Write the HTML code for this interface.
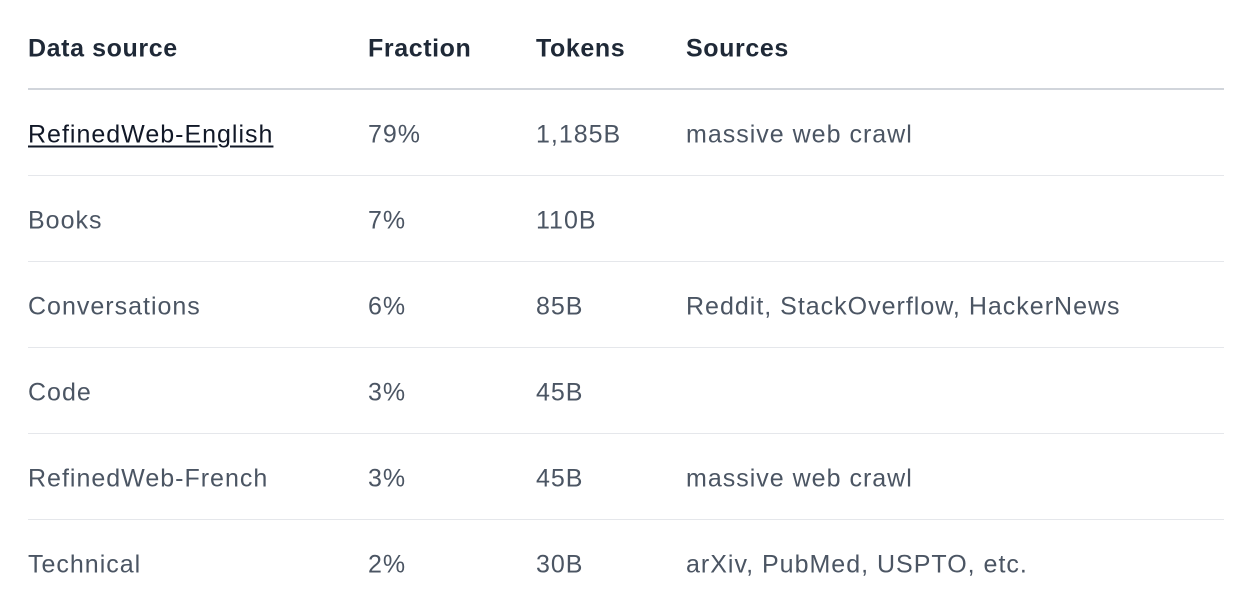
<!DOCTYPE html>
<html><head><style>
html,body{margin:0;padding:0;background:#fff;width:1240px;height:612px;overflow:hidden}
body{font-family:"Liberation Sans",sans-serif;font-size:25px;color:#4b5563;letter-spacing:1px}
.t{position:absolute;left:28px;top:0;width:1196px}
.row{position:relative;height:85px;border-bottom:1px solid #e5e7eb}
.row.h{height:88px;border-bottom:2px solid #d1d5db;color:#1f2937;font-weight:bold;letter-spacing:0.6px}
.row span{position:absolute;top:50%;transform:translateY(-50%);white-space:nowrap}
.c1{left:0}.c2{left:340px}.c3{left:508px}.c4{left:658px}
.row.h span{top:49px}
.row:not(.h) span{top:45px}
.row.last{border-bottom:none}
a{color:#111827;text-decoration:underline;text-underline-offset:3px;text-decoration-thickness:2px}
</style></head><body>
<div class="t">
<div class="row h"><span class="c1">Data source</span><span class="c2">Fraction</span><span class="c3">Tokens</span><span class="c4">Sources</span></div>
<div class="row"><span class="c1"><a>RefinedWeb-English</a></span><span class="c2">79%</span><span class="c3">1,185B</span><span class="c4">massive web crawl</span></div>
<div class="row"><span class="c1">Books</span><span class="c2">7%</span><span class="c3">110B</span></div>
<div class="row"><span class="c1">Conversations</span><span class="c2">6%</span><span class="c3">85B</span><span class="c4">Reddit, StackOverflow, HackerNews</span></div>
<div class="row"><span class="c1">Code</span><span class="c2">3%</span><span class="c3">45B</span></div>
<div class="row"><span class="c1">RefinedWeb-French</span><span class="c2">3%</span><span class="c3">45B</span><span class="c4">massive web crawl</span></div>
<div class="row last"><span class="c1">Technical</span><span class="c2">2%</span><span class="c3">30B</span><span class="c4">arXiv, PubMed, USPTO, etc.</span></div>
</div>
</body></html>
